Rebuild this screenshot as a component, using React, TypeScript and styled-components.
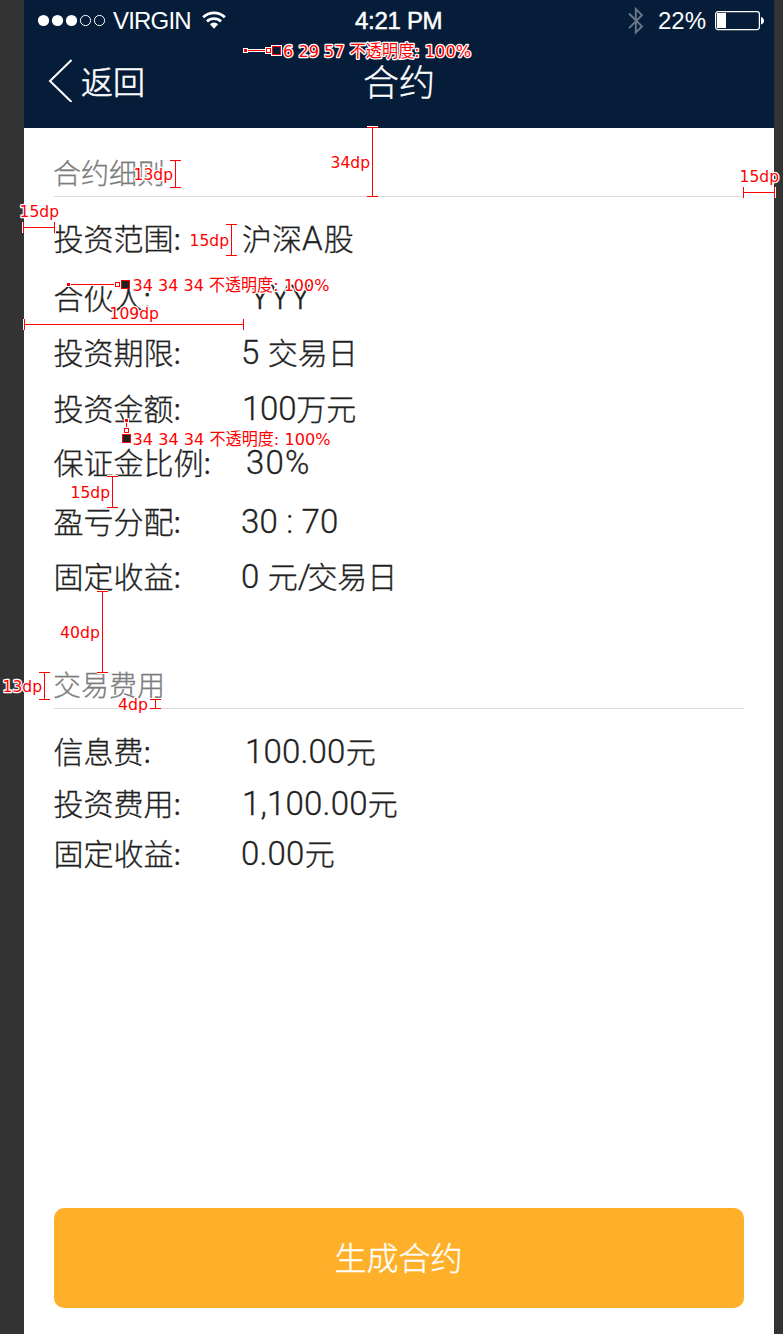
import React from 'react';
import styled, { createGlobalStyle } from 'styled-components';

const cjk = '"Noto Sans CJK SC", sans-serif';

const GlobalStyle = createGlobalStyle`
  * { box-sizing: border-box; }
  body { margin: 0; background: #333333; overflow: hidden; }
`;

const Board = styled.div`
  position: relative;
  width: 783px;
  height: 1334px;
  padding-left: 24px;
  background: #333333;
`;

const Phone = styled.main`
  display: flex;
  flex-direction: column;
  width: 750px;
  height: 1334px;
  background: #ffffff;
  color: #222222;
  font-family: ${cjk};
  font-weight: 300;
`;

const Header = styled.header`
  height: 128px;
  background: #061d39;
  color: #ffffff;
`;

const StatusBar = styled.div`
  display: grid;
  grid-template-columns: 1fr auto 1fr;
  align-items: center;
  height: 40px;
  padding: 1px 10px 0 14px;
  font: 400 24px/40px 'Liberation Sans', sans-serif;
`;

const StatusGroup = styled.div<{ $end?: boolean }>`
  display: flex;
  align-items: center;
  justify-content: ${(p) => (p.$end ? 'flex-end' : 'flex-start')};
`;

const Carrier = styled.span`
  margin: 0 11px 0 7px;
  width: 78px;
  letter-spacing: -0.8px;
  white-space: nowrap;
`;

const Clock = styled.span`
  width: 92px;
  letter-spacing: -0.3px;
  -webkit-text-stroke: 0.5px #ffffff;
  white-space: nowrap;
`;

const Percent = styled.span`
  margin: 0 9px 0 14px;
`;

const NavBar = styled.nav`
  display: grid;
  grid-template-columns: 1fr auto 1fr;
  align-items: center;
  height: 80px;
  padding-left: 24px;
`;

const BackLink = styled.a`
  display: flex;
  align-items: center;
  gap: 8px;
  font-size: 32px;
  font-weight: 300;
  line-height: 40px;
  -webkit-text-stroke: 0.6px #ffffff;
`;

const NavTitle = styled.h1`
  margin: 0 24px 0 0;
  font-size: 36px;
  font-weight: 300;
  line-height: 44px;
  -webkit-text-stroke: 0.3px #ffffff;
`;

const Content = styled.section`
  flex: 1;
  padding: 0 30px;
`;

const SectionTitle = styled.h2<{ $top: number }>`
  height: 43px;
  margin: ${(p) => p.$top}px 0 0;
  border-bottom: 1px solid #d9d9d9;
  color: #7d7d7d;
  font-size: 28px;
  font-weight: 300;
  line-height: 37px;
  text-indent: -1px;
  -webkit-text-stroke: 0.3px #7d7d7d;
`;

const DetailRow = styled.div<{ $top: number }>`
  display: grid;
  grid-template-columns: 187px 1fr;
  height: 40px;
  margin-top: ${(p) => p.$top}px;
  font-size: 30px;
  line-height: 40px;
  white-space: pre;
  -webkit-text-stroke: 0.3px #222222;
`;

const Label = styled.span`
  text-indent: -0.5px;
`;

const Value = styled.span<{ $indent: number }>`
  padding-left: ${(p) => p.$indent}px;
`;

const Figures = styled.span<{ $spacing: number }>`
  font-family: Roboto, sans-serif;
  font-weight: 300;
  font-size: 33px;
  line-height: 1;
  letter-spacing: ${(p) => p.$spacing}px;
`;

const Footer = styled.footer`
  padding: 0 30px 26px;
`;

const SubmitButton = styled.button`
  width: 100%;
  height: 100px;
  padding: 0 1px 4px 0;
  border: 0;
  border-radius: 10px;
  background: #ffb02a;
  color: #ffffff;
  font: 300 32px/96px ${cjk};
  -webkit-text-stroke: 0.3px #ffffff;
`;

const SpecLayer = styled.svg`
  position: absolute;
  inset: 0;
  pointer-events: none;
`;

const SpecText = styled.text`
  font-family: 'DejaVu Sans', 'Noto Sans CJK SC', sans-serif;
  font-size: 16.5px;
  fill: #ff0000;
  stroke: #ffffff;
  stroke-width: 2.6px;
  stroke-linejoin: round;
  paint-order: stroke;
`;

type Item = { label: string; value: string; top: number; indent: number; spacing?: number };

const details: Item[] = [
  { label: '投资范围:', value: '沪深A股', top: 20, indent: 1, spacing: 1 },
  { label: '合伙人:', value: 'YYY', top: 19, indent: 9 },
  { label: '投资期限:', value: '5 交易日', top: 15, indent: 0 },
  { label: '投资金额:', value: '100万元', top: 16, indent: 1, spacing: -0.2 },
  { label: '保证金比例:', value: '30%', top: 14, indent: 5, spacing: 1.2 },
  { label: '盈亏分配:', value: '30 : 70', top: 19, indent: 0 },
  { label: '固定收益:', value: '0 元/交易日', top: 15, indent: 0 },
];

const fees: Item[] = [
  { label: '信息费:', value: '100.00元', top: 21, indent: 4 },
  { label: '投资费用:', value: '1,100.00元', top: 12, indent: 1 },
  { label: '固定收益:', value: '0.00元', top: 10, indent: 0 },
];

function Row({ label, value, top, indent, spacing = 0.2 }: Item) {
  return (
    <DetailRow $top={top}>
      <Label>{label}</Label>
      <Value $indent={indent}>
        {value.split(/([ -~]+)/).filter(Boolean).map((part, i) =>
          /[ -~]/.test(part) ? (
            <Figures key={i} $spacing={part === '/' ? -3.5 : spacing}>{part}</Figures>
          ) : part
        )}
      </Value>
    </DetailRow>
  );
}

function Signal() {
  return (
    <svg width="68" height="14" viewBox="0 0 68 14">
      {[5.5, 19.5, 33.5].map((x) => (
        <circle key={x} cx={x} cy="6.5" r="5.6" fill="#fff" />
      ))}
      {[47.5, 61.5].map((x) => (
        <circle key={x} cx={x} cy="6.5" r="5.1" fill="none" stroke="#fff" />
      ))}
    </svg>
  );
}

function Wifi() {
  return (
    <svg width="24" height="22" viewBox="0 0 25 22">
      <g fill="none" stroke="#fff" strokeWidth="2.9">
        <path d="M1.2 7.2a16.2 16.2 0 0 1 22.6 0" />
        <path d="M5.2 11.4a10.6 10.6 0 0 1 14.6 0" />
      </g>
      <path d="M8.2 14.4a6.2 6.2 0 0 1 8.6 0L12.5 19z" fill="#fff" />
    </svg>
  );
}

function Bluetooth() {
  return (
    <svg width="16" height="28" viewBox="0 0 16 28">
      <path d="M1 6.5l13 13-6.2 6V2l6.2 6.2L1 21.2" fill="none" stroke="#6a778a" strokeWidth="1.9" />
    </svg>
  );
}

function Battery() {
  return (
    <svg width="49" height="20" viewBox="0 0 49 20">
      <rect x=".6" y=".6" width="43.8" height="18" rx="2.5" fill="none" stroke="#fff" strokeWidth="1.2" />
      <rect x="2" y="2" width="9" height="15" fill="#fff" />
      <path d="M46 6c4 1 4 6.5 0 7.5z" fill="#fff" />
    </svg>
  );
}

type Note = { text: string; x: number; y: number; width: number };

const notes: Note[] = [
  { text: '13dp', x: 133.5, y: 180, width: 39.5 },
  { text: '34dp', x: 330.5, y: 168, width: 39.5 },
  { text: '15dp', x: 739.5, y: 182, width: 39.5 },
  { text: '15dp', x: 19.5, y: 217, width: 39.5 },
  { text: '15dp', x: 189.5, y: 246, width: 39.5 },
  { text: '109dp', x: 109.5, y: 319, width: 49.5 },
  { text: '15dp', x: 70.5, y: 498, width: 39.5 },
  { text: '40dp', x: 60, y: 638, width: 40 },
  { text: '13dp', x: 2.5, y: 692, width: 39.5 },
  { text: '4dp', x: 118, y: 710, width: 30 },
  { text: '6 29 57 不透明度: 100%', x: 283, y: 57, width: 188 },
  { text: '34 34 34 不透明度: 100%', x: 132.5, y: 291, width: 197 },
  { text: '34 34 34 不透明度: 100%', x: 132.5, y: 445, width: 198 },
];

const rulers = [
  'M170 160.5h11M175.5 160v27M170 187.5h11',
  'M367 127.5h11M372.5 127v69M367 196.5h11',
  'M743.5 187v11M743 192.5h31M774.5 187v11',
  'M23.5 222v11M23 227.5h31M54.5 222v11',
  'M226 224.5h11M231.5 224v31M226 255.5h11',
  'M24.5 319v11M24 324.5h219M243.5 319v11',
  'M107 476.5h11M112.5 476v31M107 507.5h11',
  'M97 591.5h11M102.5 591v81M97 672.5h11',
  'M39 672.5h11M44.5 672v27M39 699.5h11',
  'M150 699.5h11M155.5 699v9M150 708.5h11',
  'M247 50.5h18M68 284.5h47M126.5 420v8',
].join('');

function SpecOverlay() {
  return (
    <SpecLayer width="783" height="1334" viewBox="0 0 783 1334">
      <path d={rulers} fill="none" stroke="#fff" strokeWidth="3" />
      <path d={rulers} fill="none" stroke="#f00" />
      {[[245, 50], [68, 284], [126, 420]].map(([x, y]) => (
        <g key={x}>
          <rect x={x - 2} y={y - 2} width="5" height="5" fill="#fff" />
          <rect x={x - 1} y={y - 1} width="3" height="3" fill="#f00" />
        </g>
      ))}
      {[[268, 50], [117, 284], [126, 430]].map(([x, y]) => (
        <g key={x}>
          <rect x={x - 3} y={y - 3} width="7" height="7" fill="#fff" />
          <rect x={x - 1.5} y={y - 1.5} width="4" height="4" fill="#fff" stroke="#f00" />
        </g>
      ))}
      <rect x="271" y="45" width="11" height="11" fill="#fff" />
      <rect x="272.5" y="46.5" width="8" height="8" fill="#061d39" stroke="#f00" />
      <rect x="121.5" y="280.5" width="8" height="8" fill="#222" stroke="#f00" />
      <rect x="122.5" y="434.5" width="8" height="8" fill="#222" stroke="#f00" />
      {notes.map((n) => (
        <SpecText key={`${n.x}-${n.y}`} x={n.x} y={n.y} textLength={n.width} lengthAdjust="spacingAndGlyphs">
          {n.text}
        </SpecText>
      ))}
    </SpecLayer>
  );
}

export default function App() {
  return (
    <Board>
      <GlobalStyle />
      <Phone>
        <Header>
          <StatusBar>
            <StatusGroup>
              <Signal />
              <Carrier>VIRGIN</Carrier>
              <Wifi />
            </StatusGroup>
            <Clock>4:21 PM</Clock>
            <StatusGroup $end>
              <Bluetooth />
              <Percent>22%</Percent>
              <Battery />
            </StatusGroup>
          </StatusBar>
          <NavBar>
            <BackLink>
              <svg width="25" height="44" viewBox="0 0 25 44">
                <path d="M23.5 2L2 23l21.5 21" fill="none" stroke="#fff" strokeWidth="2" />
              </svg>
              返回
            </BackLink>
            <NavTitle>合约</NavTitle>
          </NavBar>
        </Header>
        <Content>
          <SectionTitle $top={26}>合约细则</SectionTitle>
          {details.map((item) => <Row key={item.label} {...item} />)}
          <SectionTitle $top={71}>交易费用</SectionTitle>
          {fees.map((item) => <Row key={item.label} {...item} />)}
        </Content>
        <Footer>
          <SubmitButton>生成合约</SubmitButton>
        </Footer>
      </Phone>
      <SpecOverlay />
    </Board>
  );
}
